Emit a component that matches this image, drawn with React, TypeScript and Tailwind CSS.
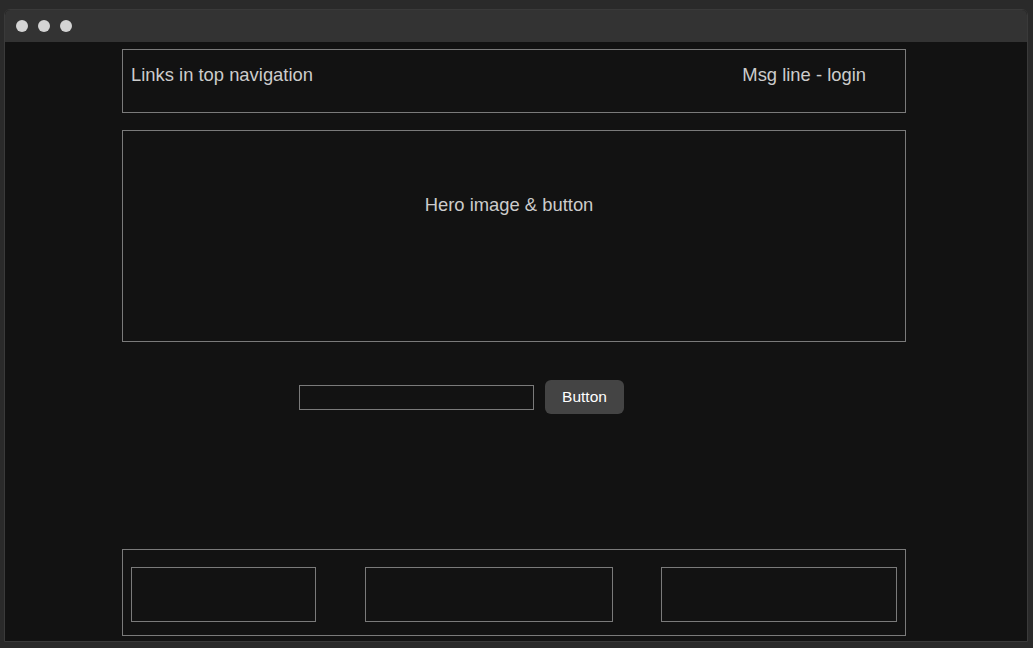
export default function App() {
  return (
    <div
      className="min-h-screen w-full bg-[#2a2a2a] pt-[9px] pl-[4px] pr-[5px] pb-[6px]"
      style={{ fontFamily: '"Liberation Sans", Arial, sans-serif' }}
    >
      <div className="flex h-[633px] flex-col overflow-hidden rounded-t-[6px] border border-[#3a3a3a] bg-[#121212]">
        {/* title bar */}
        <div className="flex h-[32px] items-center gap-[10px] bg-[#333333] pl-[11px]">
          <span className="h-[12px] w-[12px] rounded-full bg-[#d4d4d4]" />
          <span className="h-[12px] w-[12px] rounded-full bg-[#d4d4d4]" />
          <span className="h-[12px] w-[12px] rounded-full bg-[#d4d4d4]" />
        </div>

        <div className="ml-[117px] flex w-[784px] flex-col pt-[7px]">
          {/* top nav */}
          <div className="flex h-[64px] justify-between border border-[#7a7a7a] pl-[8px] pr-[39px] pt-[11px] text-[18.4px] text-[#cccccc]">
            <span>Links in top navigation</span>
            <span>Msg line - login</span>
          </div>

          {/* hero */}
          <div className="mt-[17px] flex h-[212px] justify-center border border-[#7a7a7a] pt-[60px] pr-[10px] text-[18.4px] text-[#cccccc]">
            <span>Hero image &amp; button</span>
          </div>

          {/* search row */}
          <div className="mt-[38px] flex items-center gap-[11px] pl-[177px]">
            <input
              type="text"
              className="h-[25px] w-[235px] border border-[#7a7a7a] bg-transparent outline-none"
            />
            <button className="h-[34px] w-[79px] rounded-[6px] bg-[#444444] text-[15.5px] text-white">
              Button
            </button>
          </div>

          {/* footer */}
          <div className="mt-[135px] flex h-[87px] justify-between border border-[#7a7a7a] px-[8px] pt-[17px]">
            <div className="h-[55px] w-[185px] border border-[#7a7a7a]" />
            <div className="ml-[1px] h-[55px] w-[248px] border border-[#7a7a7a]" />
            <div className="h-[55px] w-[236px] border border-[#7a7a7a]" />
          </div>
        </div>
      </div>
    </div>
  );
}
